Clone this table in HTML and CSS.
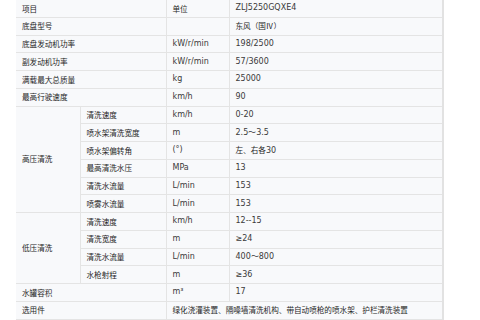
FILE: index.html
```html
<!DOCTYPE html>
<html lang="zh-CN">
<head>
<meta charset="utf-8">
<title>参数</title>
<link rel="stylesheet" href="styles.css">
</head>
<body>
<table class="spec">
  <colgroup>
    <col class="c1"><col class="c2"><col class="c3"><col class="c4">
  </colgroup>
  <tbody>
    <tr><td colspan="2">项目</td><td>单位</td><td class="en">ZLJ5250GQXE4</td></tr>
    <tr><td colspan="2">底盘型号</td><td></td><td>东风（国Ⅳ）</td></tr>
    <tr><td colspan="2">底盘发动机功率</td><td class="en">kW/r/min</td><td class="en">198/2500</td></tr>
    <tr><td colspan="2">副发动机功率</td><td class="en">kW/r/min</td><td class="en">57/3600</td></tr>
    <tr><td colspan="2">满载最大总质量</td><td class="en">kg</td><td class="en">25000</td></tr>
    <tr><td colspan="2">最高行驶速度</td><td class="en">km/h</td><td class="en">90</td></tr>
    <tr><td rowspan="6">高压清洗</td><td>清洗速度</td><td class="en">km/h</td><td class="en">0-20</td></tr>
    <tr><td>喷水架清洗宽度</td><td class="en">m</td><td class="en">2.5～3.5</td></tr>
    <tr><td>喷水架偏转角</td><td class="en">(°)</td><td>左、右各<span class="en">30</span></td></tr>
    <tr><td>最高清洗水压</td><td class="en">MPa</td><td class="en">13</td></tr>
    <tr><td>清洗水流量</td><td class="en">L/min</td><td class="en">153</td></tr>
    <tr><td>喷雾水流量</td><td class="en">L/min</td><td class="en">153</td></tr>
    <tr><td rowspan="4">低压清洗</td><td>清洗速度</td><td class="en">km/h</td><td class="en">12--15</td></tr>
    <tr><td>清洗宽度</td><td class="en">m</td><td class="en">≥24</td></tr>
    <tr><td>清洗水流量</td><td class="en">L/min</td><td class="en">400～800</td></tr>
    <tr><td>水枪射程</td><td class="en">m</td><td class="en">≥36</td></tr>
    <tr><td colspan="2">水罐容积</td><td class="en">m³</td><td class="en">17</td></tr>
    <tr><td colspan="2">选用件</td><td colspan="2">绿化浇灌装置、隔噪墙清洗机构、带自动喷枪的喷水架、护栏清洗装置</td></tr>
  </tbody>
</table>
</body>
</html>
```

FILE: styles.css
```css
html, body {
  margin: 0;
  padding: 0;
  background: #ffffff;
}

.spec {
  margin: -1px 0 0 16px;
  width: 427px;
  border-collapse: collapse;
  table-layout: fixed;
  font-family: "Noto Sans CJK SC", "DejaVu Sans", sans-serif;
  font-size: 7.6px;
  color: #262626;
}

.c1 { width: 64px; }
.c2 { width: 86px; }
.c3 { width: 63px; }
.c4 { width: 214px; }

.spec td {
  height: 16.75px;
  padding: 0 6px;
  border: 1px solid #e4e4e4;
  border-left-color: #ececec;
  background: #f8f9fb;
  white-space: nowrap;
  line-height: 1;
  vertical-align: middle;
}

.spec tr td:first-child {
  border-left: 0;
}

.spec td:last-child {
  border-right: 2px solid #e2e2e2;
}

.en {
  font-family: "DejaVu Sans", sans-serif;
  font-size: 8px;
  color: #3a3a3a;
}
```
